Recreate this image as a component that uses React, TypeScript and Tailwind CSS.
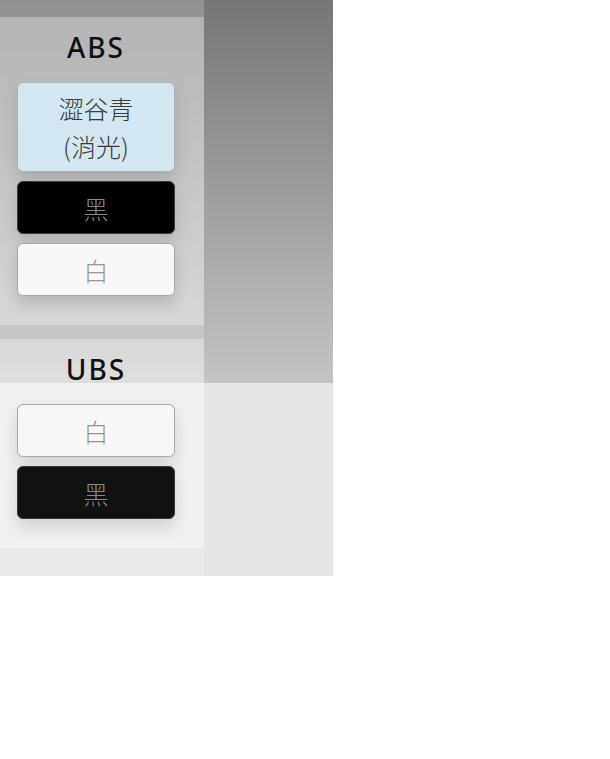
import React from "react";

type Swatch = {
  label: string;
  lines: number;
  className: string;
};

type Material = {
  name: string;
  swatches: Swatch[];
};

const materials: Material[] = [
  {
    name: "ABS",
    swatches: [
      {
        label: "澀谷青\n(消光)",
        lines: 2,
        className: "bg-[#d3e7f3] border-[#a9b4ba] text-[#3a3a3a]",
      },
      { label: "黑", lines: 1, className: "bg-black border-[#3a3a3a] text-[#8a8a8a]" },
      { label: "白", lines: 1, className: "bg-[#f8f8f8] border-[#a8a8a8] text-[#959595]" },
    ],
  },
  {
    name: "UBS",
    swatches: [
      { label: "白", lines: 1, className: "bg-[#f8f8f8] border-[#a8a8a8] text-[#959595]" },
      { label: "黑", lines: 1, className: "bg-[#111] border-[#3a3a3a] text-[#8a8a8a]" },
    ],
  },
];

const MaterialCard = ({ material }: { material: Material }) => (
  <section className="bg-white/30 pl-[17px] pt-[10px] pb-[29px]">
    <h3 className="w-[158px] text-center font-['Noto_Sans',sans-serif] text-[28px] leading-[40px] font-medium tracking-[0.07em] text-[#111] mb-[15px]">
      {material.name}
    </h3>
    <div className="flex flex-col gap-[9px]">
      {material.swatches.map((swatch, i) => (
        <button
          key={i}
          className={`w-[158px] flex flex-col items-center justify-center rounded-[6px] border text-[25px] leading-[38px] font-light whitespace-pre-line shadow-[0_8px_16px_rgba(0,0,0,0.14)] ${
            swatch.lines === 2 ? "h-[90px]" : "h-[53px]"
          } ${swatch.className}`}
        >
          {swatch.label}
        </button>
      ))}
    </div>
  </section>
);

export default function App() {
  return (
    <div
      className="w-[333px] h-[576px] flex bg-[linear-gradient(180deg,#767676_0px,#c4c4c4_383px,#e7e7e7_383px)]"
      style={{ fontFamily: '"Noto Sans CJK TC", "Noto Sans", sans-serif' }}
    >
      <aside className="w-[204px] h-full bg-white/20 pt-[17px] flex flex-col gap-[14px]">
        {materials.map((m) => (
          <MaterialCard key={m.name} material={m} />
        ))}
      </aside>
    </div>
  );
}
